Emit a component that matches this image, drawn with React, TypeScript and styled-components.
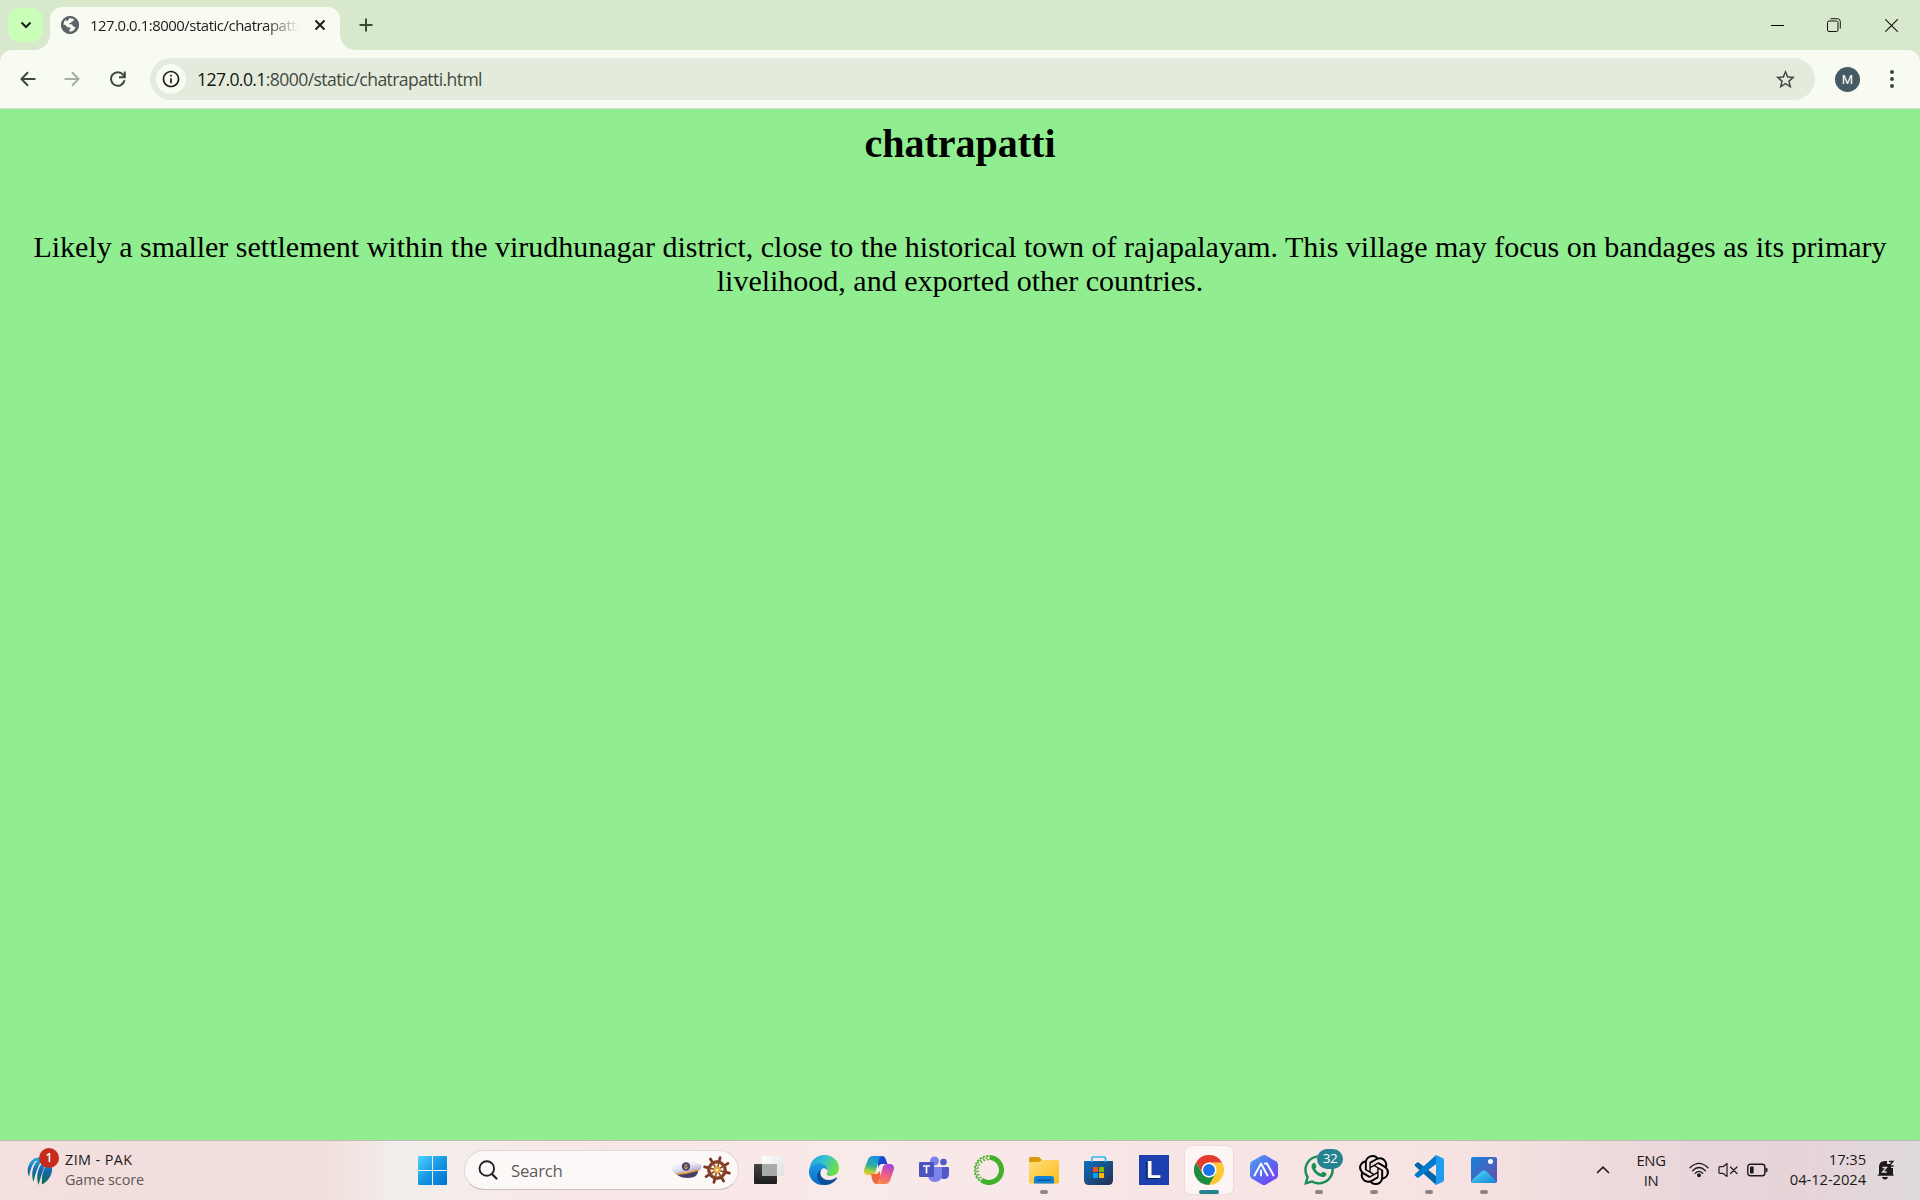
import React from "react";
import styled, { createGlobalStyle } from "styled-components";
import { MdStarBorder, MdInfoOutline } from "react-icons/md";
import { FaWhatsapp } from "react-icons/fa";
import { SiOpenai } from "react-icons/si";

const Global = createGlobalStyle`
  * { box-sizing: border-box; }
  html, body { margin: 0; padding: 0; overflow: hidden; }
  svg { display: block; flex: none; }
`;

const ui = `"Open Sans", "Noto Sans", sans-serif`;

const Screen = styled.div`
  width: 1920px;
  height: 1200px;
  display: flex;
  flex-direction: column;
  font-family: ${ui};
  overflow: hidden;
`;

/* ---------- browser chrome ---------- */

const TabStrip = styled.header`
  height: 50px;
  flex: none;
  display: flex;
  align-items: flex-end;
  background: #d8e8cd;
  padding-left: 8px;
`;

const TabSearch = styled.button`
  width: 35px;
  height: 34px;
  margin: 0 7px 8px 0;
  padding: 0;
  border: 0;
  border-radius: 12px;
  background: #c9ffb9;
  display: grid;
  place-items: center;
`;

const Tab = styled.div`
  position: relative;
  width: 290px;
  height: 43px;
  padding: 0 14px 7px 11px;
  border-radius: 12px 12px 0 0;
  background: #f8fbf2;
  display: flex;
  align-items: center;

  &::before,
  &::after {
    content: "";
    position: absolute;
    bottom: 0;
    width: 15px;
    height: 15px;
  }
  &::before {
    left: -15px;
    background: radial-gradient(circle at 0 0, transparent 14.5px, #f8fbf2 15px);
  }
  &::after {
    right: -15px;
    background: radial-gradient(circle at 100% 0, transparent 14.5px, #f8fbf2 15px);
  }
`;

const TabTitle = styled.span`
  width: 209px;
  margin-left: 11px;
  margin-right: auto;
  overflow: hidden;
  white-space: nowrap;
  font-size: 14.9px;
  letter-spacing: -0.46px;
  line-height: 22px;
  color: #1b1e19;
  mask-image: linear-gradient(90deg, #000 176px, transparent 209px);
`;

const NewTab = styled.div`
  height: 50px;
  margin-left: 19px;
  display: flex;
  align-items: center;
`;

const WindowButtons = styled.div`
  height: 50px;
  margin-left: auto;
  display: flex;
`;

const WindowButton = styled.div`
  width: 57px;
  height: 50px;
  display: grid;
  place-items: center;
`;

const ToolbarBack = styled.div`
  flex: none;
  height: 59px;
  background: #d8e8cd;
`;

const Toolbar = styled.nav`
  height: 59px;
  border-bottom: 1px solid #d5dfd0;
  border-radius: 12px 12px 0 0;
  background: #f8fbf2;
  display: flex;
  align-items: center;
  padding: 0 17px;
`;

const NavButton = styled.div<{ $w: number }>`
  width: ${(p) => p.$w}px;
  display: grid;
  place-items: center;
`;

const Omnibox = styled.div`
  flex: 1;
  height: 42px;
  margin-left: 19px;
  border-radius: 21px;
  background: #e3ebdc;
  display: flex;
  align-items: center;
  padding: 0 18px 0 6px;
`;

const SiteInfo = styled.span`
  width: 30px;
  height: 30px;
  border-radius: 50%;
  background: #f8fbf2;
  display: grid;
  place-items: center;
  color: #1b1e19;
`;

const Url = styled.span`
  margin-left: 11px;
  margin-right: auto;
  font-size: 17.6px;
  line-height: 24px;
  letter-spacing: -0.6px;
  color: #434a40;
  white-space: nowrap;
`;

const Host = styled.span`
  color: #14170f;
`;

const Avatar = styled.div`
  width: 25px;
  height: 25px;
  margin-left: 20px;
  border-radius: 50%;
  background: #455a64;
  color: #fff;
  font: 400 13px/25px Roboto, sans-serif;
  text-align: center;
`;

const MenuDots = styled.div`
  margin: 0 9px 0 30px;
`;

/* ---------- page ---------- */

const Page = styled.main`
  flex: 1;
  background: #90ee90;
  padding: 0 10px;
  text-align: center;
  color: #000;
  font-family: "Liberation Serif", "Times New Roman", serif;
`;

const Title = styled.h1`
  margin: 0;
  padding-top: 12px;
  font-size: 40px;
  line-height: 46px;
  font-weight: 700;
`;

const Paragraph = styled.p`
  margin: 63px 0 0;
  font-size: 30px;
  line-height: 34px;
`;

/* ---------- taskbar ---------- */

const Taskbar = styled.footer`
  height: 60px;
  flex: none;
  border-top: 1px solid #c3b9b5;
  padding-bottom: 1px;
  background: linear-gradient(
    90deg,
    #f4e1df 0,
    #f2dedd 120px,
    #f2dedc 320px,
    #f2edeb 395px,
    #f4edea 450px,
    #f9e6e6 620px,
    #f8eae9 840px,
    #f8e6e6 1150px,
    #f6e3e2 1440px,
    #f0dcdc 1580px,
    #e8d5da 1700px,
    #e6d4d9 1800px,
    #dfdadb 1920px
  );
  display: flex;
  align-items: center;
`;

const Widget = styled.div`
  width: 405px;
  padding-left: 26px;
  display: flex;
  align-items: center;
`;

const WidgetIcon = styled.div`
  position: relative;
  width: 39px;
  height: 44px;
  padding-top: 8px;
`;

const AlertBadge = styled.span`
  position: absolute;
  left: 13px;
  top: 0;
  width: 20px;
  height: 20px;
  border-radius: 50%;
  background: #c42b1c;
  color: #fff;
  font-size: 12px;
  font-weight: 600;
  line-height: 20px;
  text-align: center;
`;

const WidgetText = styled.div`
  display: flex;
  flex-direction: column;
  font-size: 14.4px;
  line-height: 20px;
  letter-spacing: -0.1px;
  padding-bottom: 1px;
  color: #1b1a1a;
`;

const Headline = styled.span`
  letter-spacing: 0.4px;
`;

const Muted = styled.span`
  color: #5e5858;
`;

const Cell = styled.div`
  position: relative;
  width: 55px;
  height: 58px;
  display: grid;
  place-items: center;
`;

const ActiveTile = styled.div`
  width: 48px;
  height: 48px;
  border-radius: 6px;
  background: #fcf5f4;
  box-shadow: 0 0 1px 1px rgba(190, 160, 160, 0.18);
  display: grid;
  place-items: center;
`;

const Indicator = styled.span<{ $active?: boolean }>`
  position: absolute;
  bottom: 5px;
  left: 50%;
  width: ${(p) => (p.$active ? 20 : 8)}px;
  height: 4px;
  transform: translateX(-50%);
  border-radius: 2px;
  background: ${(p) => (p.$active ? "#25828f" : "#8f8483")};
`;

const CountBadge = styled.span`
  position: absolute;
  left: 26px;
  top: 8px;
  width: 26px;
  height: 20px;
  border-radius: 10px;
  background: #25828f;
  color: #fff;
  font-size: 13.5px;
  line-height: 19px;
  letter-spacing: -0.4px;
  text-align: center;
`;

const SearchBox = styled.div`
  width: 275px;
  height: 40px;
  margin: 0 2px 0 4px;
  padding: 0 6px 0 13px;
  border: 1px solid #e3d8d6;
  border-bottom-color: #c9bfbd;
  border-radius: 20px;
  background: #fcf8f7;
  display: flex;
  align-items: center;
`;

const SearchLabel = styled.span`
  margin: 0 auto 0 13px;
  padding-top: 1px;
  font-size: 16.8px;
  line-height: 24px;
  letter-spacing: -0.25px;
  color: #605c5b;
`;

const Tray = styled.div`
  margin-left: auto;
  height: 58px;
  display: flex;
  align-items: center;
  padding-right: 25px;
  color: #1c1a1b;
  font-size: 14.8px;
  line-height: 20px;
  letter-spacing: -0.1px;
`;

const Language = styled.div`
  width: 34px;
  margin: 0 21px 0 24px;
  text-align: center;
  letter-spacing: -0.3px;
  padding-bottom: 1px;
`;

const Status = styled.div`
  display: flex;
  align-items: center;
  gap: 9px;
`;

const Clock = styled.div`
  width: 98px;
  margin-right: 11px;
  padding-bottom: 2px;
  text-align: right;
  white-space: nowrap;
`;

/* ---------- drawings ---------- */

const GlobeIcon = () => (
  <svg width="18" height="18" viewBox="0 0 18 18">
    <circle cx="9" cy="9" r="9" fill="#5f6368" />
    <path fill="#f8fbf2" d="M8.200 2.200Q11 1.900 13 3.200Q13.200 5 11 5.600Q10.600 7 8.400 7.200L8 8.300H10.400Q12 8.600 12 10.500Q14 10.600 14.600 11.600Q12.800 15.800 8.600 15.800L8.400 13.400Q10 12.800 9.600 11.800Q8 11.400 6.800 11.200Q5 10.400 4.600 9Q3 8.800 2.200 8.200Q2.400 4.800 5.200 3.200L5.400 5.400Q7.800 4.800 8.200 2.200z" />
    <circle cx="9" cy="9" r="8" fill="none" stroke="#5f6368" strokeWidth="2" />
  </svg>
);

const CricketIcon = () => (
  <svg width="29" height="31" viewBox="0 0 29 31">
    <defs>
      <linearGradient id="icc" gradientUnits="userSpaceOnUse" x1="14" y1="0" x2="14" y2="29">
        <stop offset="0" stopColor="#22b4ec" />
        <stop offset=".5" stopColor="#1268ac" />
        <stop offset="1" stopColor="#0b7048" />
      </linearGradient>
    </defs>
    <g fill="url(#icc)">
      <path d="M9 2C2 6 0 14 3.200 21C4 13 7 7 11 3z" />
      <path d="M14 2C7 8 4.500 17 7.500 26C9 18 12 10 16 4z" />
      <path d="M19 4C12 10 9.500 20 12.500 29C15 20 17.500 12 21 7z" />
      <path d="M9 2.500Q18-2 24 7L19 9Q17 4 9 5z" />
      <path d="M22 7C18 12 15 19 16 28.500C23 25 28 17 25.500 8z" />
    </g>
  </svg>
);

const WindowsIcon = () => (
  <svg width="29" height="29" viewBox="0 0 29 29">
    <defs>
      <linearGradient id="win" x1="0" y1="0" x2="1" y2="1">
        <stop offset="0" stopColor="#4fd4ff" />
        <stop offset=".5" stopColor="#1697e5" />
        <stop offset="1" stopColor="#0070cd" />
      </linearGradient>
    </defs>
    <path fill="url(#win)" d="M1 0H14V14H0V1Q0 0 1 0zM15 0H28Q29 0 29 1V14H15zM0 15H14V29H1Q0 29 0 28zM15 15H29V28Q29 29 28 29H15z" />
  </svg>
);

const CapIcon = () => (
  <svg width="30" height="20" viewBox="0 0 30 20">
    <defs>
      <linearGradient id="cap" x1="0" y1="0" x2=".6" y2="1">
        <stop offset="0" stopColor="#fff" />
        <stop offset=".5" stopColor="#e9e6f5" />
        <stop offset="1" stopColor="#9d97c8" />
      </linearGradient>
    </defs>
    <path fill="url(#cap)" d="M0 8.500Q1 4 10 2Q16 .5 23 2Q29.500 3.500 29.500 6.500Q29.500 9.500 25.500 11.500L4.500 14.500Q0 12 0 8.500z" />
    <path fill="#494065" d="M4.500 14.500Q15 13.500 26 10Q26.500 14.500 22 17Q12 20 4.500 14.500z" />
    <path d="M4.500 14Q15 13.500 26 10" stroke="#e8a638" strokeWidth="1.700" fill="none" />
    <circle cx="14" cy="6.500" r="4.200" fill="#4c456c" />
    <path d="M14 4V9M12 7Q14 10.500 16 7M12.800 5.300H15.200" stroke="#e0b860" strokeWidth=".8" fill="none" />
  </svg>
);

const WheelIcon = () => (
  <svg width="30" height="30" viewBox="-15 -15 30 30">
    <g transform="rotate(14)">
      {[0, 45, 90, 135, 180, 225, 270, 315].map((a) => (
        <g key={a} transform={`rotate(${a})`}>
          <path d="M0 -3V-13" stroke="#8a4526" strokeWidth="1.600" />
          <path d="M0 -10.500V-12.800" stroke="#7a3820" strokeWidth="2.800" strokeLinecap="round" />
        </g>
      ))}
    </g>
    <circle r="8" fill="none" stroke="#8a4526" strokeWidth="3" />
    <circle r="9.300" fill="none" stroke="#6b2f1b" strokeWidth=".8" />
    <circle r="3.600" fill="#e2a038" />
    <circle r="1.600" fill="#fbe9b5" />
  </svg>
);

const TaskViewIcon = () => (
  <svg width="30" height="28" viewBox="0 0 30 28">
    <defs>
      <linearGradient id="tv1" x1="0" y1="0" x2="0" y2="1">
        <stop offset="0" stopColor="#444" />
        <stop offset="1" stopColor="#1d1d1d" />
      </linearGradient>
      <linearGradient id="tv2" x1="0" y1="0" x2="1" y2="1">
        <stop offset="0" stopColor="#fff" />
        <stop offset="1" stopColor="#dedede" />
      </linearGradient>
    </defs>
    <rect y="8" width="23" height="20" rx="1" fill="url(#tv1)" />
    <rect x="8" width="22" height="20" rx="1" fill="url(#tv2)" />
    <path fill="#a9a9a9" d="M8 8H22Q23 8 23 9V20H9Q8 20 8 19z" />
  </svg>
);

const EdgeIcon = () => (
  <svg width="30" height="30" viewBox="0 0 30 30">
    <defs>
      <linearGradient id="ed1" x1="0" y1="0" x2="1" y2=".4">
        <stop offset="0" stopColor="#1f9fd8" />
        <stop offset=".5" stopColor="#33c1d0" />
        <stop offset="1" stopColor="#6be04a" />
      </linearGradient>
      <linearGradient id="ed2" x1="0" y1="0" x2="0" y2="1">
        <stop offset="0" stopColor="#1b9de2" />
        <stop offset="1" stopColor="#0a6ccc" />
      </linearGradient>
    </defs>
    <path fill="url(#ed1)" d="M.5 13C2 5 8 0 15 0C24 0 30 6 30 13C30 18 26 21 22 21C18 21 17 19.500 18 18C20 15 18 9 11 9C6 9 2 11 .5 13z" />
    <path fill="url(#ed2)" d="M0 15C1 10 6 8 11 8.500C16 9 19 12 18.500 16C17.500 13 14 12 12 15C9 20 14 27 21 28C9 34 -1 25 0 15z" />
    <path fill="#0d4f96" d="M12.300 14.500C10 17 11 25 20 25C24 25 26.500 23 27.500 22.500C28 22.200 28.500 22.800 28 23.400C25 28 20 30 15.500 30C10 29 7.500 24 8 20.500C8.500 17 10.500 15 12.300 14.500z" />
  </svg>
);

const CopilotIcon = () => (
  <svg width="30" height="28" viewBox="0 0 30 28">
    <defs>
      <linearGradient id="cp1" x1=".5" y1="0" x2=".3" y2="1">
        <stop offset="0" stopColor="#1b8fe6" />
        <stop offset=".5" stopColor="#2aaf9f" />
        <stop offset=".8" stopColor="#a8cf3a" />
        <stop offset="1" stopColor="#f3c42c" />
      </linearGradient>
      <linearGradient id="cp2" x1=".6" y1="0" x2=".3" y2="1">
        <stop offset="0" stopColor="#a548e0" />
        <stop offset=".5" stopColor="#ef5a86" />
        <stop offset="1" stopColor="#fb8a45" />
      </linearGradient>
    </defs>
    <path fill="#1a49c8" d="M14 0H18Q21 0 22 4L23.500 8H18Q15 8 14 12z" />
    <path fill="url(#cp1)" d="M9 0H18Q15.500 1 14.500 5L11.500 16Q10.500 19 7 19H3Q-1 18 .3 13L4 3.500Q5.500 0 9 0z" />
    <path fill="#f0653f" d="M7 18H12Q14 18 15.500 15L17 21L13 28H12Q9 27 8 23z" />
    <path fill="url(#cp2)" d="M23 8H27Q31 9 29.700 14L26 24.500Q24.500 28 21 28H12Q14.500 27 15.500 23L18.500 12Q19.500 8 23 8z" />
  </svg>
);

const TeamsIcon = () => (
  <svg width="30" height="28" viewBox="0 0 30 28">
    <circle cx="24.500" cy="6" r="3.300" fill="#5059c9" />
    <path fill="#5059c9" d="M20 11H29Q30 11 30 12V18Q30 23 25 23Q21 23 20 19z" />
    <circle cx="15.500" cy="5" r="4.500" fill="#7b83eb" />
    <path fill="#7b83eb" d="M9 11H22Q23 11 23 12V19Q22.500 26 16 26Q9 26 9 18z" />
    <rect y="6" width="15" height="15" rx="1.300" fill="#4b53bc" />
    <path d="M4 10H11M7.500 10V17.500" stroke="#fff" strokeWidth="1.700" />
  </svg>
);

const AnacondaIcon = () => (
  <svg width="30" height="30" viewBox="0 0 30 30" fill="none" stroke="#43b02a">
    <path d="M15.500 2.500A12.500 12.500 0 1 1 7.500 25" strokeWidth="5" />
    <path d="M14.500 1A14 14 0 0 0 6 26" strokeWidth="1.800" strokeDasharray="2.200 1.300" />
    <path d="M14.500 2.800A12.200 12.200 0 0 0 6.800 24.800" strokeWidth="1.800" strokeDasharray="1.400 1.800" strokeDashoffset="1.700" />
    <path d="M14.500 4.500A10.500 10.500 0 0 0 7.500 23" strokeWidth="1.600" strokeDasharray="1.600 1.800" />
  </svg>
);

const FolderIcon = () => (
  <svg width="30" height="27" viewBox="0 0 30 27">
    <defs>
      <linearGradient id="fo" x1="0" y1="0" x2="1" y2="1">
        <stop offset="0" stopColor="#ffdf7c" />
        <stop offset="1" stopColor="#fdbb17" />
      </linearGradient>
    </defs>
    <path fill="#dc9a0a" d="M1.500 0H10L13 3V6H0V1.500Q0 0 1.500 0z" />
    <path fill="url(#fo)" d="M0 5H10L13 3H28.500Q30 3 30 4.500V25Q30 26.500 28.500 26.500H1.500Q0 26.500 0 25z" />
    <path fill="#1181d6" d="M7.500 19H22.500Q25 19 25 21.500V26.500H5V21.500Q5 19 7.500 19z" />
    <path d="M9 23.200H21" stroke="#0a57a0" strokeWidth="1.500" strokeLinecap="round" />
  </svg>
);

const StoreIcon = () => (
  <svg width="29" height="30" viewBox="0 0 29 30">
    <defs>
      <linearGradient id="st" x1="0" y1="0" x2="1" y2="1">
        <stop offset="0" stopColor="#0f6cbd" />
        <stop offset="1" stopColor="#243050" />
      </linearGradient>
    </defs>
    <path fill="url(#st)" d="M1 6H28Q29 6 29 7V25Q29 30 24 30H5Q0 30 0 25V7Q0 6 1 6z" />
    <path d="M8 7V3Q8 2 9 2H20.500Q21.500 2 21.500 3V7" stroke="#2fb8f5" strokeWidth="1.700" fill="none" />
    <path fill="#f25022" d="M9 12h5v5H9z" />
    <path fill="#7fba00" d="M15 12h5v5h-5z" />
    <path fill="#00a4ef" d="M9 18h5v5H9z" />
    <path fill="#ffb900" d="M15 18h5v5h-5z" />
  </svg>
);

const LetterTile = styled.div`
  width: 30px;
  height: 30px;
  background: #1d3fb0;
  color: #fff;
  font: 700 24px/30px "Liberation Sans", Arial, sans-serif;
  text-align: center;
  text-shadow: -1.5px 1px 0 #0b1d4d;
`;

const ChromeIcon = () => (
  <svg width="30" height="30" viewBox="0 0 48 48">
    <path fill="#fcc934" d="M24 24L24 12H44.800A24 24 0 0 1 24 48z" />
    <path fill="#e33b2e" d="M3.200 12L13.600 30L24 24V12H44.800A24 24 0 0 0 3.200 12z" />
    <path fill="#1e8e3e" d="M3.200 12A24 24 0 0 0 24 48L34.400 30L24 24L13.600 30z" />
    <circle cx="24" cy="24" r="12" fill="#fff" />
    <circle cx="24" cy="24" r="9.500" fill="#1a73e8" />
  </svg>
);

const HexIcon = () => (
  <svg width="28" height="30" viewBox="0 0 28 30">
    <defs>
      <linearGradient id="hx" x1="0" y1="0" x2="1" y2="1">
        <stop offset="0" stopColor="#4aa3ee" />
        <stop offset=".5" stopColor="#5a6bf0" />
        <stop offset="1" stopColor="#7c35ee" />
      </linearGradient>
    </defs>
    <path fill="url(#hx)" d="M12 .6Q14-.4 16 .6L26 6.300Q28 7.500 28 9.500V20.500Q28 22.500 26 23.700L16 29.400Q14 30.400 12 29.400L2 23.700Q0 22.500 0 20.500V9.500Q0 7.500 2 6.300z" />
    <path d="M4.500 20.500L11 8.500L17.500 20.500M11 15.500V20.500M15 8.500H17L23.500 20.500" fill="none" stroke="#fff" strokeWidth="1.900" strokeLinejoin="round" strokeLinecap="round" />
  </svg>
);

const CodeIcon = () => (
  <svg width="30" height="30" viewBox="0 0 30 30">
    <path fill="#0065a9" d="M1 9.200L3 7.500Q3.800 7 4.700 7.600L22 21V29.500L20.500 28.500L1 11Q0 10 1 9.200z" />
    <path fill="#007acc" d="M1 20.800L3 22.500Q3.800 23 4.700 22.400L22 9V.5L20.500 1.500L1 19Q0 20 1 20.800z" />
    <path fill="#1f9cf0" d="M22 0L29 3.200Q30 3.700 30 5V25Q30 26.300 29 26.800L22 30Q21 30 20.500 28.500L22 27.500V2.500L20.500 1.500Q21 0 22 0z" />
  </svg>
);

const PhotosIcon = () => (
  <svg width="26" height="26" viewBox="0 0 26 26">
    <defs>
      <linearGradient id="ph1" x1="0" y1="0" x2="1" y2="1">
        <stop offset="0" stopColor="#1584dc" />
        <stop offset="1" stopColor="#6a4ba6" />
      </linearGradient>
      <linearGradient id="ph2" x1="0" y1="0" x2="1" y2="1">
        <stop offset="0" stopColor="#54dcf7" />
        <stop offset="1" stopColor="#1183d8" />
      </linearGradient>
    </defs>
    <rect width="26" height="26" rx="2" fill="url(#ph1)" />
    <path fill="url(#ph2)" d="M1 23L11 14Q13 12.500 15 14L25.500 24Q25 26 23.500 26H2.500Q0 26 1 23z" />
    <circle cx="19.500" cy="4.600" r="2.500" fill="#fff" />
  </svg>
);

const WifiIcon = () => (
  <svg width="20" height="16" viewBox="0 0 20 16" fill="none" stroke="#1c1a1b" strokeWidth="1.300" strokeLinecap="round">
    <path d="M1 5.800Q10-3 19 5.800M3.600 8.700Q10 2.300 16.400 8.700M6.200 11.400Q10 7.400 13.800 11.400" />
    <circle cx="10" cy="13.300" r="1.300" fill="#1c1a1b" />
  </svg>
);

const MutedIcon = () => (
  <svg width="20" height="16" viewBox="0 0 20 16" fill="none" stroke="#1c1a1b" strokeWidth="1.200" strokeLinejoin="round" strokeLinecap="round">
    <path d="M9 1.500V14.500L5 11.300H2Q1 11.300 1 10.300V5.700Q1 4.700 2 4.700H5z" />
    <path d="M12.500 5L19 11.500M19 5L12.500 11.500" />
  </svg>
);

const BatteryIcon = () => (
  <svg width="21" height="14" viewBox="0 0 21 14">
    <rect x=".8" y="1.300" width="17" height="11.400" rx="2.500" fill="none" stroke="#1c1a1b" strokeWidth="1.400" />
    <rect x="3" y="3.500" width="3.600" height="7" rx=".8" fill="#1c1a1b" />
    <path d="M18.500 4.500L20.500 5.500V8.500L18.500 9.500z" fill="#1c1a1b" />
  </svg>
);

const SnoozeBell = () => (
  <svg width="18" height="20" viewBox="0 0 18 20">
    <path fill="#1c1a1b" d="M2 14V7Q2 1 8 1H10V4H14V8H16V14L16.800 15.700H.2zM5 17H11Q10.500 19.500 8 19.500Q5.500 19.500 5 17z" />
    <path d="M5.500 7.500H9.500L5.500 12H9.800" fill="none" stroke="#e6d8da" strokeWidth="1.300" />
    <path d="M12 1.500H16L12 6H16.500" fill="none" stroke="#1c1a1b" strokeWidth="1.300" />
  </svg>
);

type App = { name: string; icon: React.ReactNode; state?: "open" | "active"; badge?: string };

const apps: App[] = [
  { name: "taskview", icon: <TaskViewIcon /> },
  { name: "edge", icon: <EdgeIcon /> },
  { name: "copilot", icon: <CopilotIcon /> },
  { name: "teams", icon: <TeamsIcon /> },
  { name: "anaconda", icon: <AnacondaIcon /> },
  { name: "explorer", icon: <FolderIcon />, state: "open" },
  { name: "store", icon: <StoreIcon /> },
  { name: "letter", icon: <LetterTile>L</LetterTile> },
  { name: "chrome", icon: <ChromeIcon />, state: "active" },
  { name: "hex", icon: <HexIcon /> },
  { name: "whatsapp", icon: <FaWhatsapp size={34} color="#1a8f55" />, state: "open", badge: "32" },
  { name: "chatgpt", icon: <SiOpenai size={30} color="#000" />, state: "open" },
  { name: "code", icon: <CodeIcon />, state: "open" },
  { name: "photos", icon: <PhotosIcon />, state: "open" },
];

const line = { fill: "none", strokeWidth: 2 } as const;

export default function App() {
  return (
    <Screen>
      <Global />
      <TabStrip>
        <TabSearch>
          <svg width="12" height="8" viewBox="0 0 12 8">
            <path d="M1.500 1.500L6 6L10.500 1.500" {...line} stroke="#14200f" />
          </svg>
        </TabSearch>
        <Tab>
          <GlobeIcon />
          <TabTitle>127.0.0.1:8000/static/chatrapatti.html</TabTitle>
          <svg width="12" height="12" viewBox="0 0 12 12">
            <path d="M1.500 1.500L10.500 10.500M10.500 1.500L1.500 10.500" {...line} stroke="#1b1e19" />
          </svg>
        </Tab>
        <NewTab>
          <svg width="14" height="14" viewBox="0 0 14 14">
            <path d="M7 .5V13.500M.5 7H13.500" {...line} stroke="#3c4b37" />
          </svg>
        </NewTab>
        <WindowButtons>
          <WindowButton>
            <svg width="13" height="13" viewBox="0 0 13 13">
              <path d="M0 6.500H13" stroke="#000" />
            </svg>
          </WindowButton>
          <WindowButton>
            <svg width="16" height="14" viewBox="0 0 16 14" fill="none" stroke="#111">
              <rect x=".5" y="3" width="10.500" height="10.500" rx="1.500" />
              <path d="M3.500 .7H10.500Q13.300 .7 13.300 3.500V10.500" />
            </svg>
          </WindowButton>
          <WindowButton>
            <svg width="13" height="13" viewBox="0 0 13 13">
              <path d="M.3 .3L12.700 12.700M12.700 .3L.3 12.700" stroke="#111" strokeWidth="1.100" />
            </svg>
          </WindowButton>
        </WindowButtons>
      </TabStrip>
      <ToolbarBack>
        <Toolbar>
          <NavButton $w={22}>
            <svg width="16" height="16" viewBox="0 0 16 16">
              <path d="M15.500 8H2M8 1.300L1.500 8L8 14.700" {...line} stroke="#3c4b37" />
            </svg>
          </NavButton>
          <NavButton $w={66}>
            <svg width="16" height="16" viewBox="0 0 16 16">
              <path d="M.5 8H14M8 1.300L14.500 8L8 14.700" {...line} stroke="#a7aea2" />
            </svg>
          </NavButton>
          <NavButton $w={26}>
            <svg width="16" height="16" viewBox="0 0 16 16">
              <path d="M14.500 9.300A6.800 6.800 0 1 1 13.200 3.800L14 5M14.800 .5V6.200H9" {...line} stroke="#3c4b37" />
            </svg>
          </NavButton>
          <Omnibox>
            <SiteInfo>
              <MdInfoOutline size={20} />
            </SiteInfo>
            <Url>
              <Host>127.0.0.1</Host>:8000/static/chatrapatti.html
            </Url>
            <MdStarBorder size={23} color="#454a43" />
          </Omnibox>
          <Avatar>M</Avatar>
          <MenuDots>
            <svg width="4" height="18" viewBox="0 0 4 18" fill="#3c4b37">
              <circle cx="2" cy="2" r="2" />
              <circle cx="2" cy="9" r="2" />
              <circle cx="2" cy="16" r="2" />
            </svg>
          </MenuDots>
        </Toolbar>
      </ToolbarBack>
      <Page>
        <Title>chatrapatti</Title>
        <Paragraph>
          Likely a smaller settlement within the virudhunagar district, close to the historical town of
          rajapalayam. This village may focus on bandages as its primary livelihood, and exported other
          countries.
        </Paragraph>
      </Page>
      <Taskbar>
        <Widget>
          <WidgetIcon>
            <CricketIcon />
            <AlertBadge>1</AlertBadge>
          </WidgetIcon>
          <WidgetText>
            <Headline>ZIM - PAK</Headline>
            <Muted>Game score</Muted>
          </WidgetText>
        </Widget>
        <Cell>
          <WindowsIcon />
        </Cell>
        <SearchBox>
          <svg width="20" height="20" viewBox="0 0 20 20" fill="none" stroke="#222" strokeWidth="1.900" strokeLinecap="round">
            <circle cx="8.800" cy="8.500" r="7.300" />
            <path d="M14 14L18.500 18.500" strokeWidth="2.200" />
          </svg>
          <SearchLabel>Search</SearchLabel>
          <CapIcon />
          <WheelIcon />
        </SearchBox>
        {apps.map((a) => (
          <Cell key={a.name}>
            {a.state === "active" ? <ActiveTile>{a.icon}</ActiveTile> : a.icon}
            {a.state && <Indicator $active={a.state === "active"} />}
            {a.badge && <CountBadge>{a.badge}</CountBadge>}
          </Cell>
        ))}
        <Tray>
          <svg width="14" height="8" viewBox="0 0 14 8">
            <path d="M1 7L7 1.200L13 7" fill="none" stroke="#1c1a1b" strokeWidth="1.600" />
          </svg>
          <Language>
            ENG
            <br />
            IN
          </Language>
          <Status>
            <WifiIcon />
            <MutedIcon />
            <BatteryIcon />
          </Status>
          <Clock>
            17:35
            <br />
            04-12-2024
          </Clock>
          <SnoozeBell />
        </Tray>
      </Taskbar>
    </Screen>
  );
}
